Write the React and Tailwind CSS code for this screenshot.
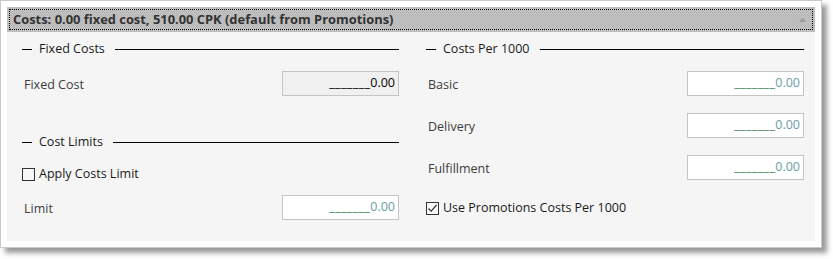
import React from 'react';

const font = { fontFamily: '"Open Sans", "Noto Sans", sans-serif' };

function SectionTitle({ children }) {
  return (
    <div className="flex items-center h-[20px]">
      <div className="w-[10px] h-px bg-black" />
      <span className="ml-[7px] mr-[10px] text-[12.5px] text-[#1a1a1a] whitespace-nowrap">{children}</span>
      <div className="flex-1 h-px bg-black" />
    </div>
  );
}

function MaskInput({ disabled }) {
  return (
    <div
      className={`w-[117px] h-[25px] border border-[#c4c4c4] flex items-center justify-end pr-[3px] text-[12.5px] whitespace-nowrap ${
        disabled ? 'bg-[#f0f0f0]' : 'bg-white'
      }`}
    >
      <span className={`tracking-[0.4px] ${disabled ? 'text-black' : 'text-[#3f8a5c]'}`}>_______</span>
      <span className={disabled ? 'text-black' : 'text-[#6a9ea8]'}>0.00</span>
    </div>
  );
}

function FieldRow({ label, disabled, className = '' }) {
  return (
    <div className={`flex items-center justify-between pl-[2px] ${className}`}>
      <span className="pt-[3px] text-[12.5px] text-[#3d3d3d]">{label}</span>
      <MaskInput disabled={disabled} />
    </div>
  );
}

function Checkbox({ checked, label, className = '' }) {
  return (
    <div className={`flex items-center h-[20px] ${className}`}>
      <div className="w-[13px] h-[13px] border border-[#333] bg-[#f7f7f7] flex items-center justify-center">
        {checked && (
          <svg width="11" height="11" viewBox="0 0 11 11">
            <path d="M1.5 5.5 L4.2 8.2 L9.5 2" fill="none" stroke="#333" strokeWidth="1.2" />
          </svg>
        )}
      </div>
      <span className="ml-[4px] text-[12.5px] text-[#1a1a1a]">{label}</span>
    </div>
  );
}

export default function App() {
  return (
    <div className="w-[833px] h-[259px] bg-white" style={font}>
      <div className="w-[822px] h-[248px] bg-white border border-[#c9c9c9] shadow-[5px_5px_5px_rgba(0,0,0,0.4)] p-[6px] flex flex-col">
        {/* Header */}
        <div className="h-[25px] bg-[#bdbdbd] p-[2px]">
          <div className="h-full border border-dotted border-black flex items-center justify-between pl-[3px] pr-[6px]">
            <span className="text-[12.9px] font-bold text-[#333]">
              Costs: 0.00 fixed cost, 510.00 CPK (default from Promotions)
            </span>
            <svg width="7" height="4" viewBox="0 0 7 4">
              <path d="M0 4 L3.5 0 L7 4 Z" fill="#9a9a9a" />
            </svg>
          </div>
        </div>

        {/* Body */}
        <div className="flex-1 bg-[#f5f5f5] pl-[15px] pr-[16px] pt-[7px] grid grid-cols-[377px_378px] gap-x-[27px]">
          <div className="flex flex-col">
            <SectionTitle>Fixed Costs</SectionTitle>
            <FieldRow label="Fixed Cost" disabled className="mt-[12px]" />
            <div className="mt-[36px]">
              <SectionTitle>Cost Limits</SectionTitle>
            </div>
            <Checkbox label="Apply Costs Limit" className="mt-[12px]" />
            <FieldRow label="Limit" className="mt-[11px]" />
          </div>

          <div className="flex flex-col">
            <SectionTitle>Costs Per 1000</SectionTitle>
            <FieldRow label="Basic" className="mt-[12px]" />
            <FieldRow label="Delivery" className="mt-[17px]" />
            <FieldRow label="Fulfillment" className="mt-[17px]" />
            <Checkbox checked label="Use Promotions Costs Per 1000" className="mt-[18px]" />
          </div>
        </div>
      </div>
    </div>
  );
}
